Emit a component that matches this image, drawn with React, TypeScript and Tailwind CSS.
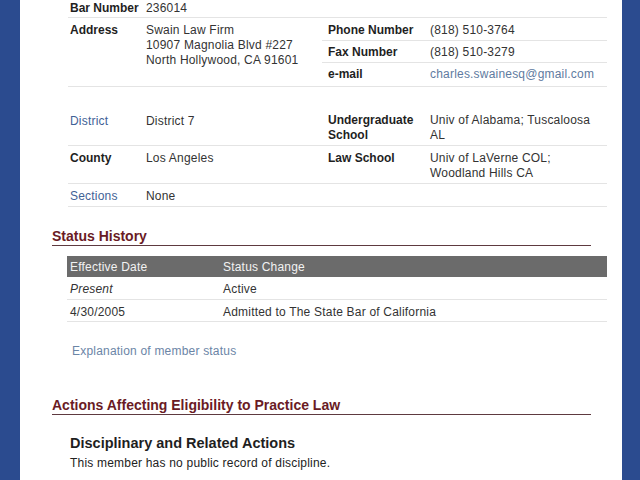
import React from 'react';

// Attorney profile detail page (fragment)
const labelCls = 'font-bold tracking-normal text-[#1f1f1f]';
const valueCls = 'text-[#333333]';
const linkLabelCls = 'text-[#3f6296]';

const statusRows = [
  { date: 'Present', change: 'Active', italic: true },
  { date: '4/30/2005', change: 'Admitted to The State Bar of California', italic: false },
];

const App: React.FC = () => {
  return (
    <div
      className="min-h-screen bg-[#2b4b8f] pl-[20px] pr-[18px] text-[12px] leading-[15px] tracking-[0.2px]"
      style={{ fontFamily: '"Liberation Sans", Arial, sans-serif' }}
    >
      <div className="min-h-screen bg-white pl-[32px] pr-[15px] pb-4">
        {/* Contact info block */}
        <div className="ml-[16px] flex">
          <div className="w-[254px]">
            <div className="flex h-[18px] border-b border-[#e4e4e4] pl-[2px] pt-[1px]">
              <div className={`w-[76px] ${labelCls}`}>Bar Number</div>
              <div className={valueCls}>236014</div>
            </div>
            <div className="flex h-[69px] border-b border-[#e4e4e4] pl-[2px] pt-[5px]">
              <div className={`w-[76px] ${labelCls}`}>Address</div>
              <div className={valueCls}>
                Swain Law Firm
                <br />
                10907 Magnolia Blvd #227
                <br />
                North Hollywood, CA 91601
              </div>
            </div>
          </div>
          <div className="flex-1">
            <div className="h-[18px] border-b border-[#e4e4e4]" />
            <div className="flex h-[23px] border-b border-[#e4e4e4] pl-[6px] pt-[5px]">
              <div className={`w-[102px] ${labelCls}`}>Phone Number</div>
              <div className={valueCls}>(818) 510-3764</div>
            </div>
            <div className="flex h-[22px] border-b border-[#e4e4e4] pl-[6px] pt-[4px]">
              <div className={`w-[102px] ${labelCls}`}>Fax Number</div>
              <div className={valueCls}>(818) 510-3279</div>
            </div>
            <div className="flex h-[24px] border-b border-[#e4e4e4] pl-[6px] pt-[4px]">
              <div className={`w-[102px] ${labelCls}`}>e-mail</div>
              <a href="#" className="text-[#5f7ba0]">charles.swainesq@gmail.com</a>
            </div>
          </div>
        </div>

        {/* Membership info block */}
        <div className="ml-[16px] flex">
          <div className="w-[254px]">
            <div className="flex h-[59px] border-b border-[#e4e4e4] pl-[2px] pt-[27px]">
              <a href="#" className={`w-[76px] ${linkLabelCls}`}>District</a>
              <div className={valueCls}>District 7</div>
            </div>
            <div className="flex h-[38px] border-b border-[#e4e4e4] pl-[2px] pt-[5px]">
              <div className={`w-[76px] ${labelCls}`}>County</div>
              <div className={valueCls}>Los Angeles</div>
            </div>
            <div className="flex h-[23px] border-b border-[#e4e4e4] pl-[2px] pt-[5px]">
              <a href="#" className={`w-[76px] ${linkLabelCls}`}>Sections</a>
              <div className={valueCls}>None</div>
            </div>
          </div>
          <div className="flex-1">
            <div className="flex h-[59px] border-b border-[#e4e4e4] pl-[6px] pt-[26px]">
              <div className={`w-[102px] ${labelCls}`}>
                Undergraduate
                <br />
                School
              </div>
              <div className={valueCls}>
                Univ of Alabama; Tuscaloosa
                <br />
                AL
              </div>
            </div>
            <div className="flex h-[38px] border-b border-[#e4e4e4] pl-[6px] pt-[5px]">
              <div className={`w-[102px] ${labelCls}`}>Law School</div>
              <div className={valueCls}>
                Univ of LaVerne COL;
                <br />
                Woodland Hills CA
              </div>
            </div>
            <div className="h-[23px] border-b border-[#e4e4e4]" />
          </div>
        </div>

        {/* Status History */}
        <h2 className="mt-[21px] mr-[16px] border-b border-[#5e3a40] text-[14px] font-bold leading-[17px] tracking-normal text-[#6a1b25]">
          Status History
        </h2>
        <div className="mt-[10px] ml-[15px]">
          <div className="flex h-[21px] bg-[#6b6b6b] pl-[3px] pt-[4px] text-[#f2f2f2]">
            <div className="w-[153px]">Effective Date</div>
            <div>Status Change</div>
          </div>
          {statusRows.map((row, i) => (
            <div
              key={i}
              className={`flex border-b border-[#e4e4e4] pl-[3px] pt-[5px] text-[#333333] ${i === 0 ? 'h-[23px]' : 'h-[22px]'}`}
            >
              <div className={`w-[153px] ${row.italic ? 'italic' : ''}`}>{row.date}</div>
              <div>{row.change}</div>
            </div>
          ))}
        </div>
        <div className="mt-[22px] ml-[20px]">
          <a href="#" className="text-[#6b85a6]">Explanation of member status</a>
        </div>

        {/* Actions Affecting Eligibility */}
        <h2 className="mt-[38px] mr-[16px] border-b border-[#5e3a40] text-[14px] font-bold leading-[17px] tracking-normal text-[#6a1b25]">
          Actions Affecting Eligibility to Practice Law
        </h2>
        <div className="ml-[18px] mt-[20px]">
          <h3 className="text-[14.5px] font-bold leading-[17px] tracking-normal text-[#1f1f1f]">
            Disciplinary and Related Actions
          </h3>
          <p className="mt-[4px] text-[#222222]">This member has no public record of discipline.</p>
        </div>
      </div>
    </div>
  );
};

export default App;
